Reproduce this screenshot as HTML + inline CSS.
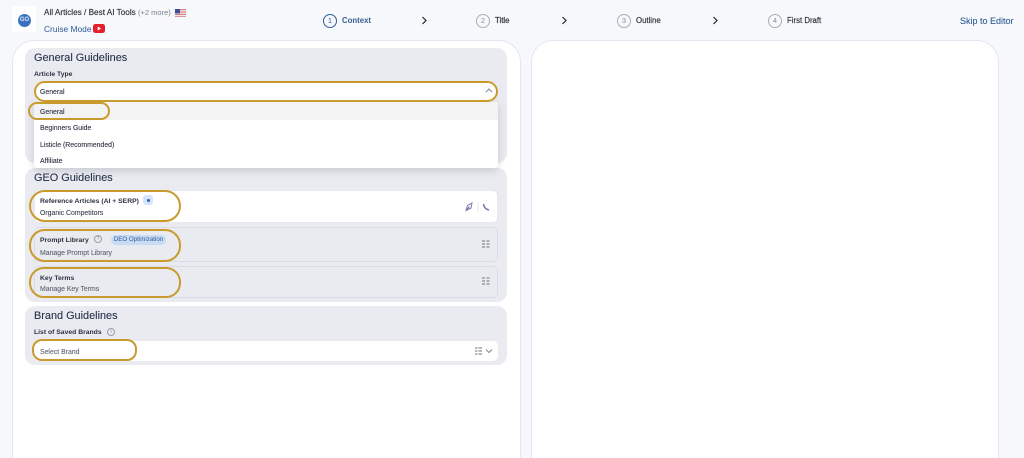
<!DOCTYPE html>
<html><head><meta charset="utf-8"><style>
html,body{margin:0;padding:0;width:1024px;height:458px;overflow:hidden}
body{position:relative;background:#f6f8fb;font-family:"Liberation Sans",sans-serif;color:#2a3040}
#w{position:absolute;left:0;top:0;width:1024px;height:458px;overflow:hidden;filter:blur(.25px)}
.a{position:absolute;white-space:nowrap}
.card{position:absolute;top:40px;height:440px;background:#fff;border:1px solid #e3e6ee;border-radius:22px;box-sizing:border-box}
.sec{position:absolute;left:25px;width:482px;background:#e9ebf0;border-radius:10px}
.h{position:absolute;left:34px;font-size:10.900px;color:#26304a;white-space:nowrap;-webkit-text-stroke:.1px #26304a}
.t{font-size:6.800px;font-weight:bold;color:#2b3140;margin-top:2px}
.s{font-size:6.900px;color:#4d5566;-webkit-text-stroke:.1px currentColor;margin-top:2px}
.row{position:absolute;left:34px;width:464px;box-sizing:border-box;border-radius:5px;border:1px solid #d9dce4}
.gold{position:absolute;border:2px solid #c99a2e;box-sizing:border-box;border-radius:14px}
.num{position:absolute;box-sizing:border-box;border-radius:50%;border:1px solid #a9adb5;width:14px;height:14px;top:14px;font-size:7.500px;line-height:12px;text-align:center;color:#888d96}
</style></head><body><div id="w">

<div class="a" style="left:12px;top:6px;width:24px;height:26px;background:#fff;border-radius:3px"></div>
<div class="a" style="left:18px;top:14px;width:13px;height:13px;border-radius:50%;background:#3a72bd;color:#dbe7f7;font-size:6px;line-height:13px;text-align:center;font-weight:bold">GO</div>
<div class="a" style="left:44px;top:8px;font-size:8.200px;color:#30343e;-webkit-text-stroke:.15px #30343e">All Articles / Best AI Tools <span style="color:#7a7f88;-webkit-text-stroke:0;font-size:7.500px">(+2 more)</span></div>
<svg class="a" style="left:175px;top:9px" width="11" height="8" viewBox="0 0 11 8"><rect width="11" height="8" fill="#d9808a"/><rect y="1.200" width="11" height="1.200" fill="#f4e8ea"/><rect y="3.600" width="11" height="1.200" fill="#f4e8ea"/><rect y="6" width="11" height="1.200" fill="#f4e8ea"/><rect width="5" height="4.400" fill="#3f4f8f"/></svg>
<div class="a" style="left:44px;top:24px;font-size:8.400px;color:#2c5a9b">Cruise Mode</div>
<svg class="a" style="left:93px;top:24px" width="12" height="9" viewBox="0 0 12 9"><rect width="12" height="9" rx="2.400" fill="#e3202b"/><path d="M4.700 2.500L8.200 4.500L4.700 6.500Z" fill="#fff"/></svg>

<div class="num" style="left:323px;border-color:#2f5d9c;color:#2f5d9c">1</div>
<div class="a" style="left:342px;top:16px;font-size:7.800px;font-weight:bold;color:#3a5e94">Context</div>
<div class="num" style="left:476px">2</div>
<div class="a" style="left:495px;top:16px;font-size:7.800px;color:#33373f;-webkit-text-stroke:.2px #33373f">Title</div>
<div class="num" style="left:617px">3</div>
<div class="a" style="left:636px;top:16px;font-size:7.800px;color:#33373f;-webkit-text-stroke:.2px #33373f">Outline</div>
<div class="num" style="left:768px">4</div>
<div class="a" style="left:787px;top:16px;font-size:7.800px;color:#33373f;-webkit-text-stroke:.2px #33373f">First Draft</div>
<svg class="a" style="left:420px;top:16px" width="8" height="9" viewBox="0 0 8 9"><path d="M2.500 1L6 4.500L2.500 8" fill="none" stroke="#22252c" stroke-width="1.200"/></svg>
<svg class="a" style="left:560px;top:16px" width="8" height="9" viewBox="0 0 8 9"><path d="M2.500 1L6 4.500L2.500 8" fill="none" stroke="#22252c" stroke-width="1.200"/></svg>
<svg class="a" style="left:711px;top:16px" width="8" height="9" viewBox="0 0 8 9"><path d="M2.500 1L6 4.500L2.500 8" fill="none" stroke="#22252c" stroke-width="1.200"/></svg>
<div class="a" style="left:960px;top:16px;font-size:9px;color:#2f5a94;-webkit-text-stroke:.1px #2f5a94">Skip to Editor</div>

<div class="card" style="left:12px;width:509px"></div>
<div class="card" style="left:531px;width:468px"></div>

<div class="sec" style="top:48px;height:115px"></div>
<div class="sec" style="top:168px;height:134px"></div>
<div class="sec" style="top:306px;height:59px"></div>

<div class="h" style="top:52px">General Guidelines</div>
<div class="a t" style="left:34px;top:69px">Article Type</div>
<div class="a" style="left:34px;top:81px;width:464px;height:21px;background:#fff;border-radius:10px"></div>
<div class="a s" style="left:40px;top:87px;color:#2b3140">General</div>
<svg class="a" style="left:484px;top:87px" width="10" height="7" viewBox="0 0 10 7"><path d="M2 5L5 2L8 5" fill="none" stroke="#858a94" stroke-width="1"/></svg>

<div class="a" style="left:34px;top:102px;width:464px;height:66px;background:#fff;border-radius:0 0 4px 4px;box-shadow:0 3px 8px rgba(60,70,90,.2)"></div>
<div class="a" style="left:34px;top:102px;width:464px;height:18px;background:#f3f3f4"></div>
<div class="a s" style="left:40px;top:107px;color:#2b3140">General</div>
<div class="a s" style="left:40px;top:123px;color:#2b3140">Beginners Guide</div>
<div class="a s" style="left:40px;top:140px;color:#2b3140">Listicle (Recommended)</div>
<div class="a s" style="left:40px;top:156px;color:#2b3140">Affiliate</div>
<div class="gold" style="left:34px;top:81px;width:464px;height:21px;border-radius:11px"></div>
<div class="gold" style="left:28px;top:102px;width:82px;height:18px;border-radius:9px"></div>

<div class="h" style="top:172px">GEO Guidelines</div>
<div class="row" style="top:190px;height:33px;background:#fff;border-color:#e6e8ee"></div>
<div class="a t" style="left:40px;top:196px">Reference Articles (AI + SERP)</div>
<div class="a" style="left:143px;top:195px;width:10px;height:10px;background:#d5e4fa;border-radius:3px"></div>
<div class="a" style="left:146.500px;top:198.500px;width:3px;height:3px;background:#2a5fc0;border-radius:50%"></div>
<div class="a s" style="left:40px;top:208px;color:#3c4352">Organic Competitors</div>
<svg class="a" style="left:464px;top:202px" width="26" height="10" viewBox="0 0 26 10"><path d="M2 8.500L3.500 3.500L8 1L7 6ZM2 8.500L5.500 4.500" fill="none" stroke="#7a78ae" stroke-width="1"/><path d="M14 .5V9.500" stroke="#d5d7de" stroke-width=".7"/><path d="M19.500 2C20 5.500 22 7.500 25 8" fill="none" stroke="#6f76ac" stroke-width="1.500"/></svg>

<div class="row" style="top:227px;height:35px;background:#e9ebf0"></div>
<div class="a t" style="left:40px;top:235px">Prompt Library</div>
<div class="a" style="left:94px;top:235px;width:8px;height:8px;box-sizing:border-box;border:1px solid #9a9ea8;border-radius:50%;font-size:5px;line-height:6px;text-align:center;color:#8a8e98">?</div>
<div class="a" style="left:111px;top:235px;width:55px;height:10px;background:#c9dcf5;border-radius:5px;font-size:6.200px;line-height:10px;text-align:center;color:#2f5a9c">DEO Optimization</div>
<div class="a s" style="left:40px;top:248px;color:#5d6472">Manage Prompt Library</div>

<div class="row" style="top:266px;height:32px;background:#e9ebf0"></div>
<div class="a t" style="left:40px;top:273px">Key Terms</div>
<div class="a s" style="left:40px;top:284px;color:#5d6472">Manage Key Terms</div>

<svg class="a" style="left:482px;top:240px" width="8" height="8" viewBox="0 0 8 8"><path d="M0 1H3M0 4H3M0 7H3M4.500 1H7.500M4.500 4H7.500M4.500 7H7.500" stroke="#6e727b" stroke-width="1"/></svg>
<svg class="a" style="left:482px;top:277px" width="8" height="8" viewBox="0 0 8 8"><path d="M0 1H3M0 4H3M0 7H3M4.500 1H7.500M4.500 4H7.500M4.500 7H7.500" stroke="#6e727b" stroke-width="1"/></svg>

<div class="gold" style="left:29px;top:190px;width:152px;height:32px;border-radius:16px"></div>
<div class="gold" style="left:29px;top:229px;width:152px;height:33px;border-radius:16px"></div>
<div class="gold" style="left:29px;top:267px;width:152px;height:31px;border-radius:15px"></div>

<div class="h" style="top:310px">Brand Guidelines</div>
<div class="a t" style="left:34px;top:327px">List of Saved Brands</div>
<div class="a" style="left:107px;top:328px;width:8px;height:8px;box-sizing:border-box;border:1px solid #9a9ea8;border-radius:50%;font-size:5px;line-height:6px;text-align:center;color:#8a8e98">i</div>
<div class="a" style="left:34px;top:341px;width:464px;height:20px;background:#fff;border-radius:5px"></div>
<div class="a s" style="left:40px;top:347px;color:#5d6472">Select Brand</div>
<svg class="a" style="left:475px;top:347px" width="18" height="8" viewBox="0 0 18 8"><path d="M0 1H2.500M0 4H2.500M0 7H2.500M3.500 1H7M3.500 4H7M3.500 7H7" stroke="#6e727b" stroke-width="1"/><path d="M11 2.500L14 5.500L17 2.500" fill="none" stroke="#858a94" stroke-width="1"/></svg>
<div class="gold" style="left:32px;top:339px;width:105px;height:22px;border-radius:10px"></div>

</div></body></html>
